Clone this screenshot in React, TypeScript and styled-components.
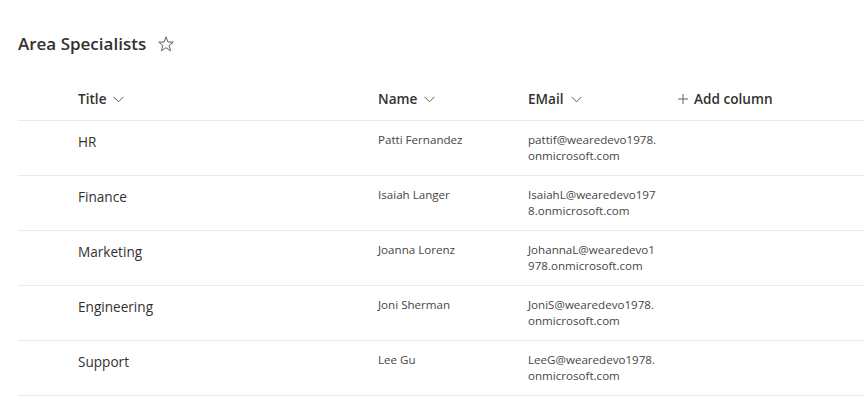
import React from 'react';
import styled, { createGlobalStyle } from 'styled-components';

const GlobalStyle = createGlobalStyle`
  body {
    margin: 0;
    background: #ffffff;
    font-family: "Segoe UI", "Open Sans", sans-serif;
    color: #323130;
  }
`;

const specialists = [
  { title: 'HR', name: 'Patti Fernandez', email: ['pattif@wearedevo1978.', 'onmicrosoft.com'] },
  { title: 'Finance', name: 'Isaiah Langer', email: ['IsaiahL@wearedevo197', '8.onmicrosoft.com'] },
  { title: 'Marketing', name: 'Joanna Lorenz', email: ['JohannaL@wearedevo1', '978.onmicrosoft.com'] },
  { title: 'Engineering', name: 'Joni Sherman', email: ['JoniS@wearedevo1978.', 'onmicrosoft.com'] },
  { title: 'Support', name: 'Lee Gu', email: ['LeeG@wearedevo1978.', 'onmicrosoft.com'] },
];

const Chevron = () => (
  <svg width="11" height="7" viewBox="0 0 11 7" fill="none">
    <path d="M0.5 0.8 L5.5 5.8 L10.5 0.8" stroke="#605e5c" strokeWidth="1" />
  </svg>
);

const Star = () => (
  <svg width="16" height="16" viewBox="0 0 16 16" fill="none">
    <path
      d="M8 0.8 L9.9 6 L15.3 6.1 L11.1 9.5 L12.6 14.8 L8 11.7 L3.4 14.8 L4.9 9.5 L0.7 6.1 L6.1 6 Z"
      stroke="#605e5c"
      strokeWidth="1"
      strokeLinejoin="round"
    />
  </svg>
);

const Plus = () => (
  <svg width="10" height="10" viewBox="0 0 10 10" fill="none">
    <path d="M5 0 V10 M0 5 H10" stroke="#605e5c" strokeWidth="1" />
  </svg>
);

const App: React.FC = () => {
  return (
    <>
      <GlobalStyle />
      <Page>
        <Heading>
          <ListTitle>Area Specialists</ListTitle>
          <FavButton aria-label="Favorite">
            <Star />
          </FavButton>
        </Heading>

        <Table>
          <HeaderRow>
            <SelectCell />
            <HeaderCell $width={300}>
              Title <Chevron />
            </HeaderCell>
            <HeaderCell $width={150}>
              Name <Chevron />
            </HeaderCell>
            <HeaderCell $width={150}>
              EMail <Chevron />
            </HeaderCell>
            <AddColumn>
              <Plus /> Add column
            </AddColumn>
          </HeaderRow>

          {specialists.map(s => (
            <Row key={s.title}>
              <SelectCell />
              <TitleCell>{s.title}</TitleCell>
              <SmallCell $width={150}>{s.name}</SmallCell>
              <SmallCell $width={150}>
                {s.email.map(line => (
                  <EmailLine key={line}>{line}</EmailLine>
                ))}
              </SmallCell>
            </Row>
          ))}
        </Table>
      </Page>
    </>
  );
};

const Page = styled.div`
  padding: 23px 0 0 18px;
`;

const Heading = styled.div`
  display: flex;
  align-items: center;
  gap: 12px;
  height: 40px;
`;

const ListTitle = styled.h1`
  margin: 0;
  font-size: 17px;
  font-weight: 600;
  color: #323130;
`;

const FavButton = styled.span`
  display: flex;
  align-items: center;
  padding-top: 1px;
`;

const Table = styled.div`
  margin-top: 17px;
`;

const HeaderRow = styled.div`
  display: flex;
  align-items: center;
  height: 41px;
  padding-bottom: 3px;
  box-sizing: border-box;
  border-bottom: 1px solid #edebe9;
`;

const SelectCell = styled.div`
  width: 60px;
  flex-shrink: 0;
`;

const HeaderCell = styled.div<{ $width: number }>`
  width: ${p => p.$width}px;
  flex-shrink: 0;
  display: flex;
  align-items: center;
  gap: 7px;
  font-size: 13.6px;
  font-weight: 600;
  color: #323130;

  svg {
    margin-top: 2px;
  }
`;

const AddColumn = styled.div`
  display: flex;
  align-items: center;
  gap: 6px;
  font-size: 13.6px;
  font-weight: 600;
  color: #323130;
`;

const Row = styled.div`
  display: flex;
  align-items: flex-start;
  padding-top: 11px;
  box-sizing: border-box;
  height: 55px;
  border-bottom: 1px solid #edebe9;
`;

const TitleCell = styled.div`
  width: 300px;
  flex-shrink: 0;
  font-size: 13.6px;
  line-height: 20px;
  color: #323130;
`;

const SmallCell = styled.div<{ $width: number }>`
  width: ${p => p.$width}px;
  flex-shrink: 0;
  font-size: 11.6px;
  line-height: 16px;
  color: #484644;
`;

const EmailLine = styled.div`
  white-space: nowrap;
`;

export default App;
